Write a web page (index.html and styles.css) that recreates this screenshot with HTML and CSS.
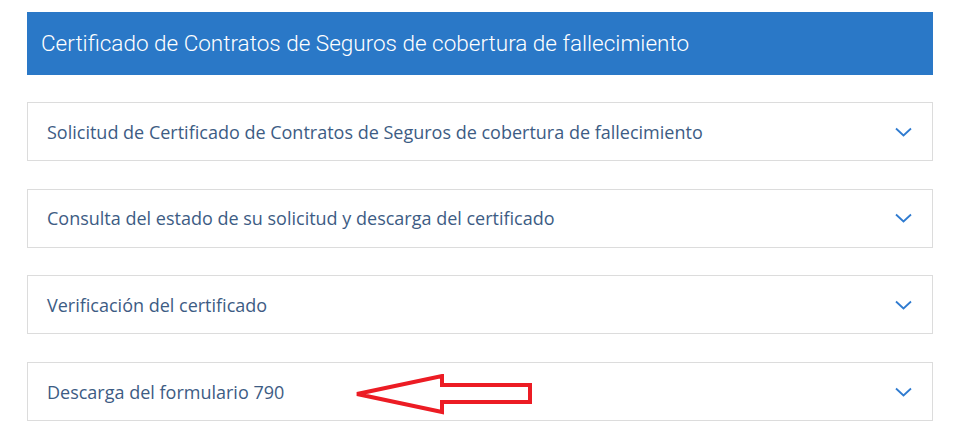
FILE: index.html
```html
<!DOCTYPE html>
<html lang="es">
<head>
<meta charset="UTF-8" />
<meta name="viewport" content="width=device-width, initial-scale=1"/>
<title>Certificado de Contratos de Seguros</title>
<link rel="stylesheet" href="styles.css">
</head>
<body>

<div class="page">
  <!-- Cabecera azul -->
  <h1 class="title">Certificado de Contratos de Seguros de cobertura de fallecimiento</h1>

  <!-- Acordeon -->
  <div class="accordion">
    <div class="item">
      <span>Solicitud de Certificado de Contratos de Seguros de cobertura de fallecimiento</span>
      <svg class="chevron" width="17" height="10" viewBox="0 0 17 10"><path d="M1 1.5 L8.5 8.5 L16 1.5" /></svg>
    </div>
    <div class="item">
      <span>Consulta del estado de su solicitud y descarga del certificado</span>
      <svg class="chevron" width="17" height="10" viewBox="0 0 17 10"><path d="M1 1.5 L8.5 8.5 L16 1.5" /></svg>
    </div>
    <div class="item">
      <span>Verificación del certificado</span>
      <svg class="chevron" width="17" height="10" viewBox="0 0 17 10"><path d="M1 1.5 L8.5 8.5 L16 1.5" /></svg>
    </div>
    <div class="item">
      <span>Descarga del formulario 790</span>
      <svg class="chevron" width="17" height="10" viewBox="0 0 17 10"><path d="M1 1.5 L8.5 8.5 L16 1.5" /></svg>
    </div>
  </div>
</div>

<!-- Flecha roja de anotacion -->
<svg class="arrow" width="190" height="44" viewBox="0 0 190 44">
  <polygon points="3,20 88,2 88,11 176,11 176,28 88,28 88,38" />
</svg>

</body>
</html>
```

FILE: styles.css
```css
* {
    margin: 0;
    padding: 0;
    box-sizing: border-box;
}

body {
    background: #fff;
    font-family: 'Open Sans', sans-serif;
    position: relative;
    overflow: hidden;
}

.page {
    padding: 12px 30px 0 27px;
}

/* Cabecera */
.title {
    width: 906px;
    height: 63px;
    background: #2a78c7;
    color: #fff;
    font-family: Roboto, sans-serif;
    font-weight: 300;
    font-size: 22.5px;
    display: flex;
    align-items: center;
    padding-left: 14px;
    padding-bottom: 1px;
}

/* Acordeon */
.accordion {
    margin-top: 27px;
    width: 906px;
    display: flex;
    flex-direction: column;
    gap: 27.7px;
}

.item {
    height: 59px;
    border: 1px solid #dcdcdc;
    display: flex;
    align-items: center;
    justify-content: space-between;
    padding: 0 20px 0 19px;
    color: #3d5c84;
    font-size: 18px;
}

.chevron path {
    fill: none;
    stroke: #2f7bd0;
    stroke-width: 1.8;
}

/* Flecha */
.arrow {
    position: absolute;
    left: 354px;
    top: 374px;
}
.arrow polygon {
    fill: none;
    stroke: #ec1c24;
    stroke-width: 4;
    stroke-linejoin: miter;
}
```
